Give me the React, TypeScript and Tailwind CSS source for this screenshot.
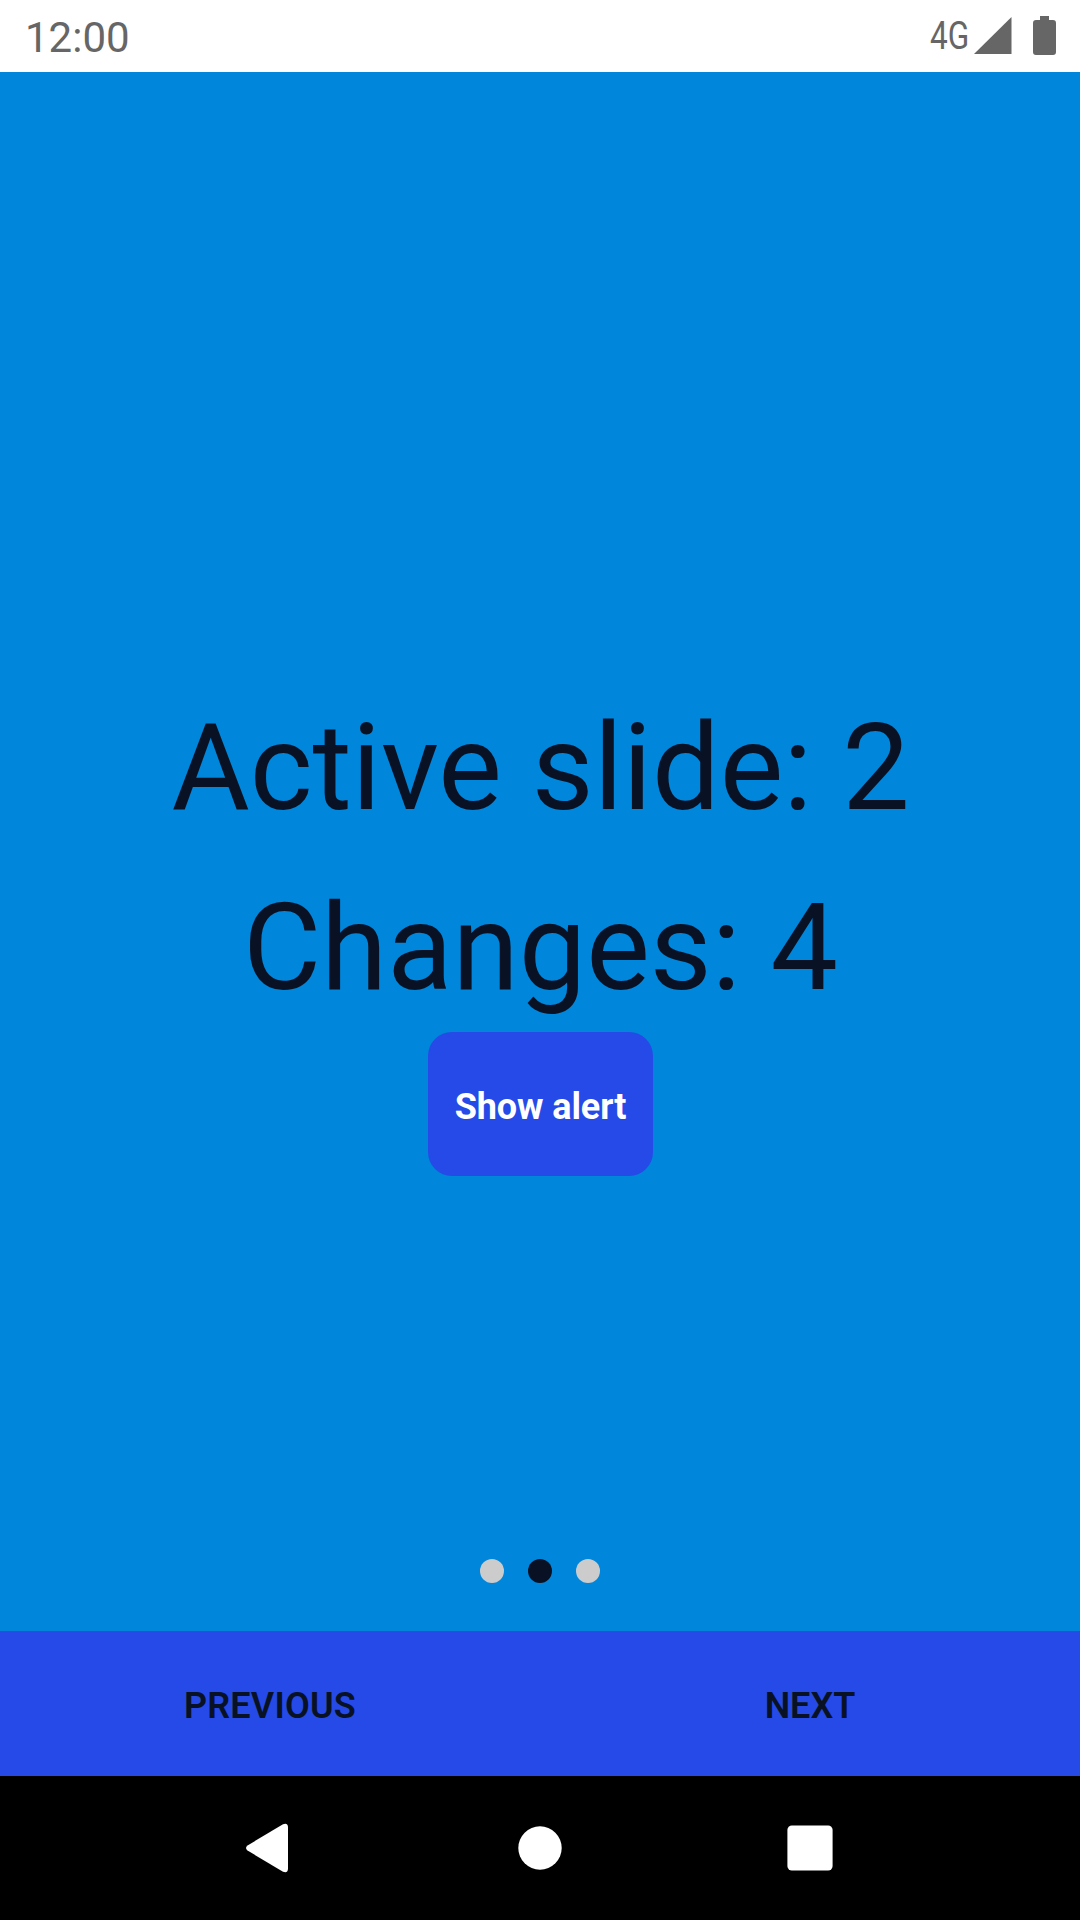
export default function App() {
  return (
    <div className="flex h-[1920px] w-[1080px] flex-col overflow-hidden bg-[#0086da] font-[Roboto,sans-serif] text-[#091224]">
      <header className="flex h-[72px] shrink-0 items-center justify-between bg-white pl-[25px] text-[#666666]">
        <span className="pt-1 text-[42px] leading-none">12:00</span>
        <div className="flex h-full">
          <span className="mt-[18px] mr-[3px] origin-right scale-x-[0.83] text-[38px] leading-9">4G</span>
          <svg width="108" height="72" viewBox="972 0 108 72" fill="currentColor">
            <path d="M974 54 L1011.500 17 V54Z" />
            <path d="M1040 16h9v4h4a3 3 0 0 1 3 3v29a3 3 0 0 1-3 3h-17a3 3 0 0 1-3-3V23a3 3 0 0 1 3-3h4z" />
          </svg>
        </div>
      </header>
      <main className="flex flex-1 flex-col items-center">
        <h1 className="h-[960px] pt-[606px] pl-px text-center text-[120px] leading-[180px]">Active slide: 2<br />Changes: 4</h1>
        <button className="h-36 w-[225px] rounded-3xl bg-[#254ae7] pt-[5px] pl-px text-[36px] font-bold tracking-[-0.1px] text-white">Show alert</button>
        <div className="mt-[383px] flex gap-6">
          <i className="size-6 rounded-full bg-[#cccccc]" />
          <i className="size-6 rounded-full bg-[#091224]" />
          <i className="size-6 rounded-full bg-[#cccccc]" />
        </div>
      </main>
      <div className="grid h-[145px] shrink-0 grid-cols-2 bg-[#254ae7] text-[36px] font-semibold">
        <button className="pt-[5px] tracking-[0.2px]">PREVIOUS</button>
        <button className="pt-[5px]">NEXT</button>
      </div>
      <nav className="h-[144px] shrink-0 bg-black">
        <svg width="1080" height="144" viewBox="0 1776 1080 144" fill="white">
          <path d="M247.500 1845.500 L283 1824.300 Q288 1822.500 288 1827.500 V1868.500 Q288 1873.500 283 1871.700 L247.500 1850.500 Q244.500 1848 247.500 1845.500Z" />
          <circle cx="540" cy="1848" r="21.700" />
          <rect x="787.400" y="1825.400" width="45.200" height="45.200" rx="4.500" />
        </svg>
      </nav>
    </div>
  );
}
